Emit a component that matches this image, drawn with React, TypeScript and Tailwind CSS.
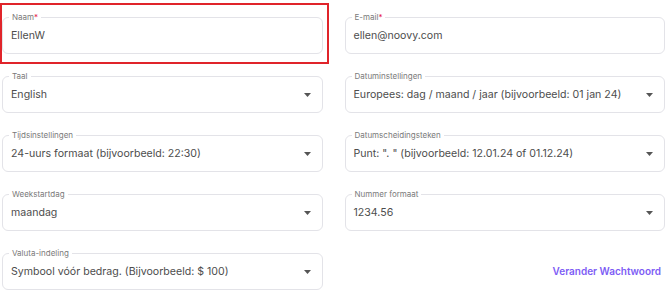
import React from 'react';

interface Field {
  label: string;
  value: string;
  required?: boolean;
  select?: boolean;
}

const fields: Field[] = [
  { label: 'Naam', value: 'EllenW', required: true },
  { label: 'E-mail', value: 'ellen@noovy.com', required: true },
  { label: 'Taal', value: 'English', select: true },
  { label: 'Datuminstellingen', value: 'Europees: dag / maand / jaar (bijvoorbeeld: 01 jan 24)', select: true },
  { label: 'Tijdsinstellingen', value: '24-uurs formaat (bijvoorbeeld: 22:30)', select: true },
  { label: 'Datumscheidingsteken', value: 'Punt: ". " (bijvoorbeeld: 12.01.24 of 01.12.24)', select: true },
  { label: 'Weekstartdag', value: 'maandag', select: true },
  { label: 'Nummer formaat', value: '1234.56', select: true },
  { label: 'Valuta-indeling', value: 'Symbool vóór bedrag. (Bijvoorbeeld: $ 100)', select: true },
];

const OutlinedField: React.FC<{ field: Field }> = ({ field }) => (
  <div className="relative h-[37px] rounded-[6px] border border-[#e3e3e8] flex items-center pl-[8px] pr-[11px]">
    <span className="absolute -top-[6px] left-[6px] bg-white px-[3px] text-[8px] leading-[10px] text-[#7a7a7a]">
      {field.label}
      {field.required && <span className="text-[#e5194a]">*</span>}
    </span>
    <span className="flex-1 whitespace-nowrap text-[10.6px] text-[#4d4d4d]">{field.value}</span>
    {field.select && (
      <svg width="7" height="4" viewBox="0 0 7 4" className="shrink-0">
        <path d="M0 0 L7 0 L3.5 4 Z" fill="#555" />
      </svg>
    )}
  </div>
);

const App: React.FC = () => {
  return (
    <div
      className="w-[670px] h-[301px] bg-white overflow-hidden pt-[17px] pl-[2px] pr-[5px]"
      style={{ fontFamily: 'Inter, "Noto Sans", sans-serif' }}
    >
      <div className="grid grid-cols-2 gap-x-[22px] gap-y-[22px]">
        {fields.map((f, i) => (
          <div key={f.label} className="relative">
            {i === 0 && (
              <div className="absolute -left-[2px] -top-[14px] w-[329px] h-[61px] border-2 border-[#e0242a] pointer-events-none" />
            )}
            <OutlinedField field={f} />
          </div>
        ))}
        <div className="flex items-center justify-end pr-[4px]">
          <button className="text-[10px] font-semibold text-[#7d5cf5]">Verander Wachtwoord</button>
        </div>
      </div>
    </div>
  );
};

export default App;
